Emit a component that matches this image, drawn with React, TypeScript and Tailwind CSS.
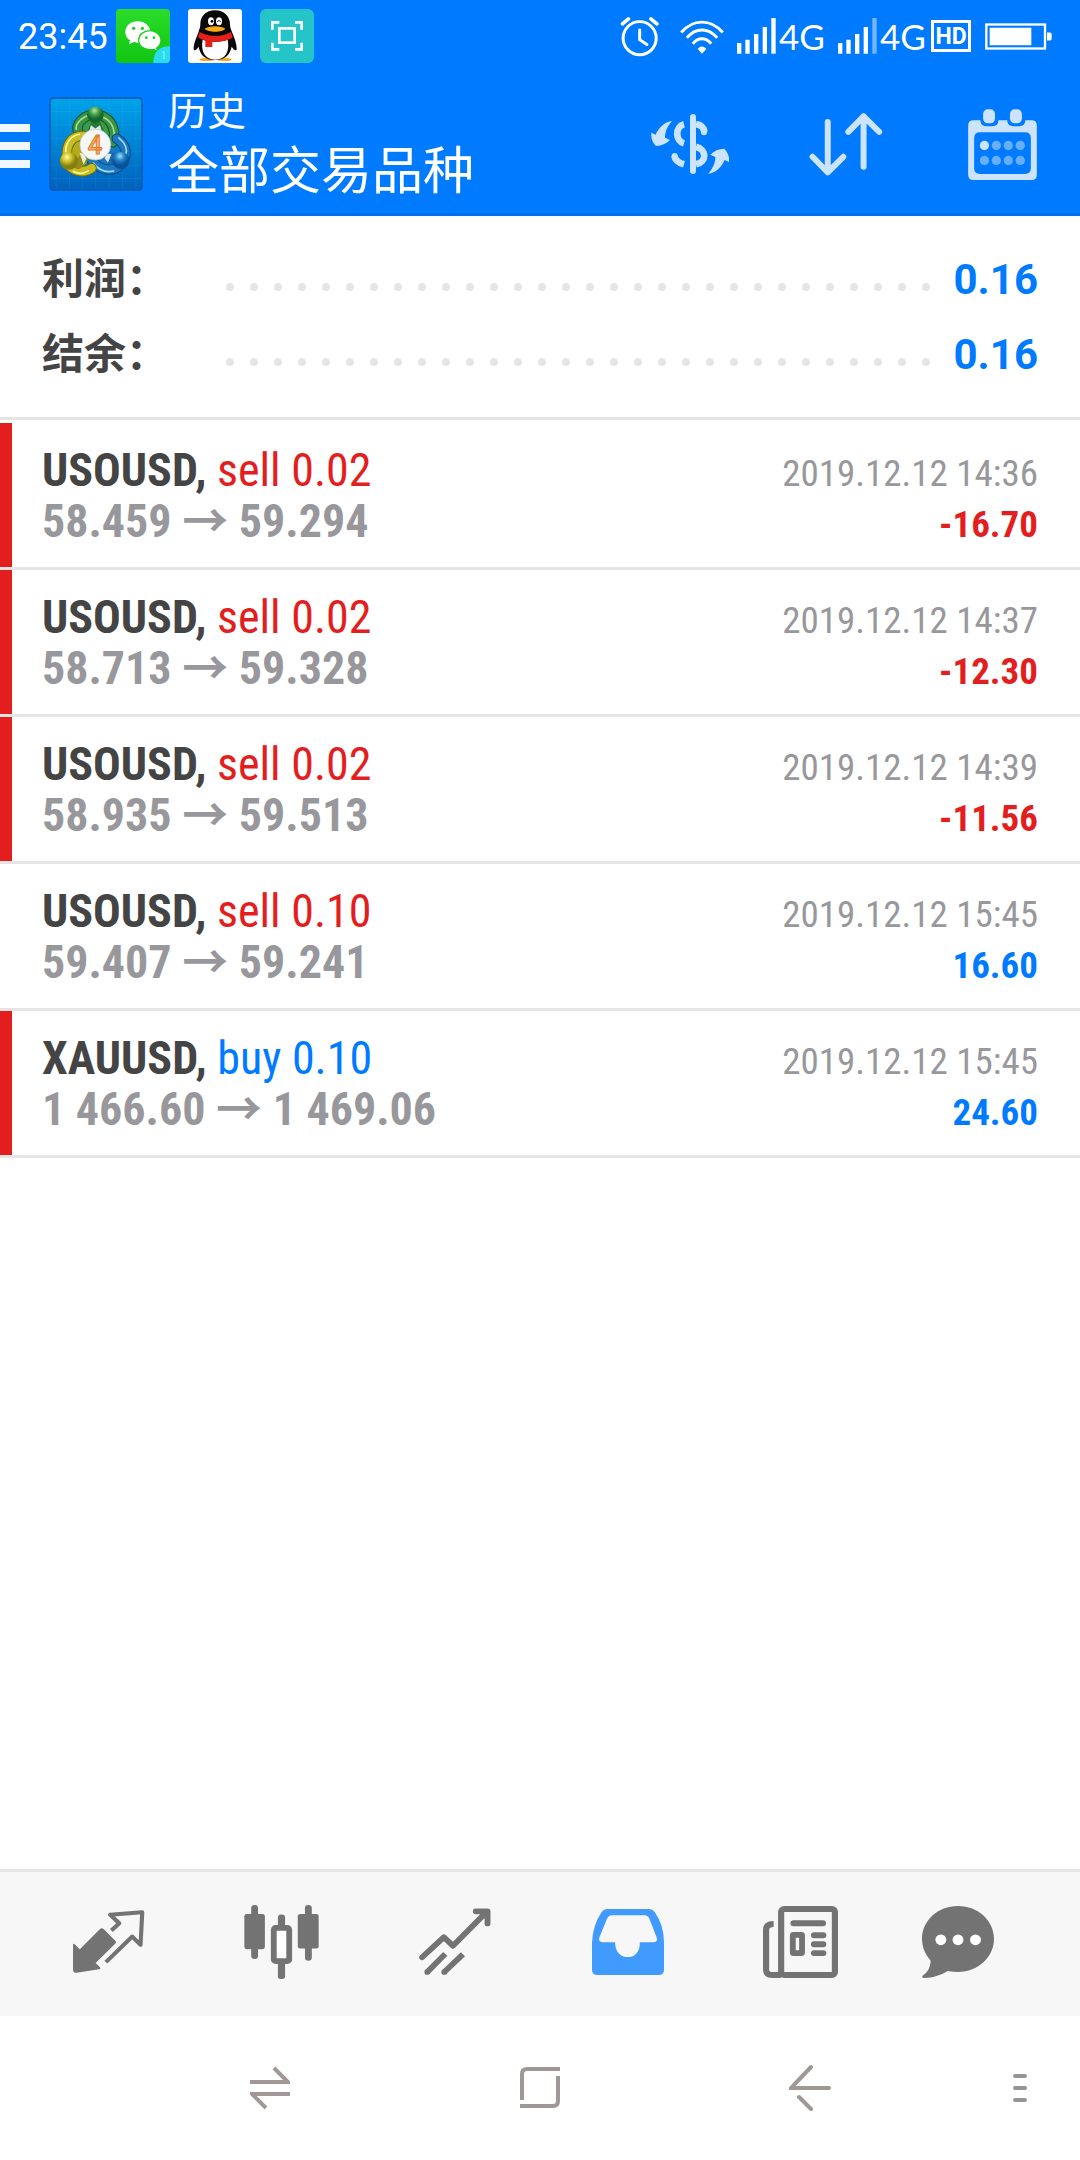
import type { ReactNode } from "react";

type Deal = {
  amount: string;
  close: string;
  flagged: boolean;
  open: string;
  side: "buy" | "sell";
  symbol: string;
  time: string;
  volume: string;
};

const DEALS: Deal[] = [
  { symbol: "USOUSD", side: "sell", volume: "0.02", open: "58.459", close: "59.294", time: "2019.12.12 14:36", amount: "-16.70", flagged: true },
  { symbol: "USOUSD", side: "sell", volume: "0.02", open: "58.713", close: "59.328", time: "2019.12.12 14:37", amount: "-12.30", flagged: true },
  { symbol: "USOUSD", side: "sell", volume: "0.02", open: "58.935", close: "59.513", time: "2019.12.12 14:39", amount: "-11.56", flagged: true },
  { symbol: "USOUSD", side: "sell", volume: "0.10", open: "59.407", close: "59.241", time: "2019.12.12 15:45", amount: "16.60", flagged: false },
  { symbol: "XAUUSD", side: "buy", volume: "0.10", open: "1 466.60", close: "1 469.06", time: "2019.12.12 15:45", amount: "24.60", flagged: true },
];

const SUMMARY = [
  { label: "利润：", value: "0.16" },
  { label: "结余：", value: "0.16" },
];

function WeChatIcon() {
  return (
    <svg viewBox="0 0 162 162" className="size-[54px]">
      <defs>
        <linearGradient id="wechat" x2="0" y2="1">
          <stop stopColor="#2bdc2b" />
          <stop offset="1" stopColor="#12c512" />
        </linearGradient>
        <clipPath id="wechat-clip">
          <rect width="162" height="162" rx="12" />
        </clipPath>
      </defs>
      <g clipPath="url(#wechat-clip)">
        <rect width="162" height="162" fill="url(#wechat)" />
        <path d="M65 37c-21 0-37 14-37 32 0 10 5 19 14 25l-3 12 14-7c5 2 9 2 14 2 20 0 36-14 36-32S86 37 65 37Z" fill="#fff" />
        <path d="M102 65c-19 0-34 12-34 29s15 28 34 28c4 0 8 0 11-1l12 7-3-11c8-5 13-13 13-23 0-17-15-29-33-29Z" fill="#fff" stroke="#1bd01b" strokeWidth="4" />
        <g fill="#1bd01b">
          <circle cx="53" cy="58" r="5" />
          <circle cx="79" cy="58" r="5" />
          <circle cx="91" cy="86" r="4" />
          <circle cx="114" cy="86" r="4" />
        </g>
        <path d="M112 162c0-32 16-50 50-50v50Z" fill="#29dcf0" />
        <path d="m139 130 5-3v24" fill="none" stroke="#9df4f8" strokeWidth="3" />
      </g>
    </svg>
  );
}

function QQIcon() {
  return (
    <svg viewBox="0 0 162 162" className="size-[54px]">
      <rect width="162" height="162" rx="9" fill="#fff" />
      <path d="M60 146c-16 0-26 3-26 6s8 4 24 4 24-2 26-6c3 4 10 6 25 6 14 0 21-1 21-4s-8-6-22-6Z" fill="#fba914" />
      <path d="M81 4c-27 0-44 18-44 42 0 8-2 13-4 18-2 13-17 35-16 58 3 6 10-2 15-9 4 25 20 40 49 40s45-15 50-40c5 7 11 15 15 9 1-23-12-45-16-58-2-5-4-10-4-18C126 22 108 4 81 4Z" fill="#080808" />
      <path d="M44 92c-7 35 8 60 38 60s44-25 37-60c-22 8-54 8-75 0Z" fill="#fff" />
      <path d="M35 69c29 16 66 16 94 0l5 17c-16 9-38 13-61 12v16H52V94c-9-2-16-5-22-9Z" fill="#e71f19" />
      <ellipse cx="69" cy="37" rx="9" ry="12" fill="#fff" />
      <ellipse cx="93" cy="37" rx="9" ry="12" fill="#fff" />
      <circle cx="72" cy="37" r="4" />
      <path d="M88 39c3-6 7-6 10 0" fill="none" stroke="#000" strokeWidth="3" />
      <path d="M50 59c10-10 52-10 62 0-9 12-52 12-62 0Z" fill="#fba914" />
    </svg>
  );
}

function ScanIcon() {
  return (
    <svg viewBox="0 0 162 162" className="size-[54px]">
      <rect width="162" height="162" rx="18" fill="#25c4c8" />
      <g fill="none" stroke="#fff" strokeWidth="8">
        <path d="M37 62V40h21M105 40h20v22M125 101v20h-20M58 121H37v-20" />
        <rect x="58" y="58" width="46" height="43" />
      </g>
    </svg>
  );
}

function AlarmIcon() {
  return (
    <svg viewBox="58 46 120 124" className="ml-auto h-[41px] w-10" fill="none" stroke="#fff" strokeLinecap="round">
      <circle cx="117" cy="113" r="50" strokeWidth="9" />
      <path d="M117 88v30l22 14" strokeWidth="9" />
      <path d="m65 70 18-15M151 55l18 15" strokeWidth="11" />
    </svg>
  );
}

function WifiIcon() {
  return (
    <svg viewBox="240 54 132 106" className="ml-5 h-[35px] w-11" fill="none" stroke="#fff" strokeWidth="9">
      <path d="M243 95c36-42 90-42 126 0M260 111c27-32 65-32 92 0M278 129c18-20 38-20 56 0" />
      <path d="m293 145c8-10 18-10 26 0l-13 14Z" fill="#fff" stroke="none" />
    </svg>
  );
}

function SignalIcon({ weak }: { weak: boolean }) {
  return (
    <svg viewBox="410 54 117 108" className="h-9 w-[39px]" fill="#fff">
      <path d="M410 129h13v32h-13ZM435 119h13v42h-13ZM461 102h13v59h-13ZM487 81h13v80h-13Z" />
      <path d="M513 54h13v107h-13Z" opacity={weak ? 0.45 : 1} />
    </svg>
  );
}

function BatteryIcon() {
  return (
    <svg viewBox="1155 68 201 80" className="ml-[14px] h-[27px] w-[67px]">
      <rect x="1159" y="72" width="176" height="72" fill="none" stroke="#fff" strokeWidth="7" />
      <path d="M1169 82h125v52h-125Z" fill="#fff" />
      <path d="M1341 96h9q5 0 5 5v14q0 5-5 5h-9Z" fill="#fff" />
    </svg>
  );
}

function AppLogo() {
  return (
    <svg viewBox="149 292 280 280" className="size-[94px]">
      <defs>
        <linearGradient id="tile" x2="0" y2="1">
          <stop stopColor="#00a3ea" />
          <stop offset="1" stopColor="#0062bd" />
        </linearGradient>
        <radialGradient id="green" cx=".45" cy=".25">
          <stop stopColor="#b8e3b0" />
          <stop offset=".5" stopColor="#46a24c" />
          <stop offset="1" stopColor="#14682a" />
        </radialGradient>
        <radialGradient id="yellow" cx=".4" cy=".3">
          <stop stopColor="#fdfbb0" />
          <stop offset=".5" stopColor="#cfc52a" />
          <stop offset="1" stopColor="#847f10" />
        </radialGradient>
        <radialGradient id="blue" cx=".45" cy=".25">
          <stop stopColor="#a5dcf7" />
          <stop offset=".5" stopColor="#2487cb" />
          <stop offset="1" stopColor="#07529a" />
        </radialGradient>
      </defs>
      <rect x="152" y="295" width="274" height="274" rx="10" fill="url(#tile)" stroke="#0757a8" strokeWidth="4" />
      <path d="M170 297v270M210 297v270M248 297v270M288 297v270M328 297v270M368 297v270M408 297v270M154 335h270M154 375h270M154 415h270M154 455h270M154 495h270M154 535h270" stroke="#5cc8ff" strokeOpacity=".16" strokeWidth="2" />
      <path d="M246 402l14-42h54l18 42Z" fill="#3f9a48" />
      <path d="M212 455l28-44 32 70-34 26Z" fill="#b5ac1c" />
      <path d="M290 478l46-44 34 40-20 40Z" fill="#1c78c0" />
      <g strokeLinecap="round" fill="none">
        <path d="M237 399c-12-28 14-52 50-56 38 4 66 36 52 84" stroke="#0f5423" strokeWidth="31" />
        <path d="M237 399c-12-28 14-52 50-56 38 4 66 36 52 84" stroke="#3a9442" strokeWidth="25" />
        <path d="M230 388c-2-22 24-40 44-42M301 349c28 8 44 30 42 62" stroke="#a5dc9c" strokeWidth="5" />
        <path d="M351 416c30 20 34 50 14 75-24 28-66 20-90-12" stroke="#064881" strokeWidth="31" />
        <path d="M351 416c30 20 34 50 14 75-24 28-66 20-90-12" stroke="#1c78c0" strokeWidth="25" />
        <path d="M357 414c22 18 26 36 20 52M341 513c-24 5-46-6-60-24" stroke="#9edbf8" strokeWidth="5" />
        <path d="M252 408c-34-2-52 22-50 62M212 500c24 18 46 16 64 4" stroke="#6f6b08" strokeWidth="31" />
        <path d="M252 408c-34-2-52 22-50 62M212 500c24 18 46 16 64 4" stroke="#c8bd22" strokeWidth="25" />
        <path d="M240 403c-28 4-42 28-41 53M222 514c14 8 28 8 44-2" stroke="#f7f49a" strokeWidth="5" />
        <path d="m263 461-28 32" stroke="#948d14" strokeWidth="28" />
      </g>
      <path d="m264 392 10-25h28l10 25Z" fill="#26793a" />
      <path d="m313 460 32-2-2 28-15 10Z" fill="#1668ae" />
      <circle cx="287" cy="345" r="25" fill="url(#green)" />
      <circle cx="208" cy="482" r="27" fill="url(#yellow)" />
      <circle cx="363" cy="481" r="26" fill="url(#blue)" />
      <path d="m274 376 13 10 14-10 5 17h-37ZM240 458l12 3 8 15-8 17ZM321 460l14 2-10 25-10-12Z" fill="#fff" opacity=".85" />
      <circle cx="287" cy="434" r="46" fill="#f5f6f8" stroke="#b8bfc8" strokeWidth="2" />
      <text x="286" y="461" textAnchor="middle" fontFamily="Roboto, sans-serif" fontSize="76" fontWeight="500" fill="#f9b56c" stroke="#e6782a" strokeWidth="3">
        4
      </text>
    </svg>
  );
}

function CurrencyIcon() {
  return (
    <svg viewBox="93 66 234 180" className="h-[60px] w-[78px]" fill="#cce4ff">
      <rect x="210" y="66" width="18" height="180" rx="9" />
      <g fill="none" stroke="#cce4ff" strokeWidth="20">
        <path d="M192 97c-27 7-27 49 0 57M228 96c17 3 24 12 25 24" />
        <path d="M228 164c33 9 33 46 0 53" />
        <path d="M192 217c-18-5-27-13-29-26" />
      </g>
      <circle cx="252" cy="121" r="9" />
      <circle cx="164" cy="192" r="9" />
      <path id="turn" d="M156 87c-22 2-40 20-49 41l-13-6c-2 16 4 30 14 40 17 0 31-7 42-18l-15-7c0-19 8-35 21-50Z" />
      <use href="#turn" transform="rotate(180 210.5 166)" />
    </svg>
  );
}

function SortIcon() {
  return (
    <svg viewBox="568 66 222 190" className="h-[63px] w-[74px]" fill="none" stroke="#cce4ff" strokeWidth="18" strokeLinecap="round" strokeLinejoin="round">
      <path d="M624 93v152M578 198l46 47 47-47M732 228V76M686 123l46-47 47 47" />
    </svg>
  );
}

function CalendarIcon() {
  return (
    <svg viewBox="1044 50 207 214" className="h-[71px] w-[69px]">
      <path fill="#cce4ff" fillRule="evenodd" d="M1060 84h21v4q3 14 17 14h20q14 0 17-14v-4h27v4q3 14 17 14h20q14 0 17-14v-4h19q16 0 16 16v148q0 16-16 16h-175q-16 0-16-16V100q0-16 16-16Zm20 36q-18 0-18 18v90q0 18 18 18h135q18 0 18-18v-90q0-18-18-18Z" />
      <rect x="1089" y="51" width="36" height="42" rx="14" fill="#cce4ff" />
      <rect x="1170" y="51" width="36" height="42" rx="14" fill="#cce4ff" />
      {[160, 205].map((cy) =>
        [1093, 1129, 1165, 1201].map((cx) => (
          <circle key={`${cx}-${cy}`} cx={cx} cy={cy} r="14" fill={cx === 1093 && cy === 160 ? "#cce4ff" : "#66afff"} />
        )),
      )}
    </svg>
  );
}

function QuotesIcon() {
  return (
    <svg viewBox="215 152 210 190" preserveAspectRatio="none" className="h-[63px] w-[72px]">
      <path fill="currentColor" d="M215 258q0-6 5-3l15 15 58-60q6-6 12 0l32 33q6 5 1 11l-57 58 12 12q5 6-2 7l-66 10q-10 1-10-9Z" />
      <path fill="none" stroke="currentColor" strokeWidth="12" strokeLinejoin="round" d="m327 214 23-22-27-26 94-7-5 98-24-25-77 77" />
    </svg>
  );
}

function ChartIcon() {
  return (
    <svg viewBox="708 134 219 223" preserveAspectRatio="none" className="h-[74px] w-[75px]">
      <g fill="currentColor">
        <rect x="709" y="161" width="60" height="106" rx="7" />
        <rect x="729" y="134" width="20" height="163" rx="10" />
        <rect x="865" y="161" width="61" height="104" rx="7" />
        <rect x="886" y="134" width="20" height="168" rx="10" />
        <rect x="807" y="163" width="21" height="50" rx="10" />
        <rect x="807" y="290" width="21" height="67" rx="8" />
      </g>
      <rect x="795" y="203" width="45" height="100" rx="5" fill="#fff" stroke="currentColor" strokeWidth="17" />
    </svg>
  );
}

function TradeIcon() {
  return (
    <svg viewBox="1213 143 208 200" preserveAspectRatio="none" className="h-[67px] w-[72px]" fill="none" stroke="currentColor" strokeWidth="17" strokeLinecap="round">
      <path strokeLinejoin="round" d="m1222 290 63-60 26 26 94-98M1377 153h34v36" />
      <path d="m1237 334 52-54M1286 334l54-53" strokeLinecap="butt" />
      <path d="M1237 334h0M1286 334h0" />
      <path d="M1396 152h16v16Z" strokeWidth="8" fill="currentColor" />
    </svg>
  );
}

function HistoryIcon() {
  return (
    <svg viewBox="148 143 209 199" preserveAspectRatio="none" className="h-[66px] w-[72px]">
      <path fill="#419bff" fillRule="evenodd" d="M192 143h122q10 0 16 9 27 40 27 92v82q0 16-16 16H164q-16 0-16-16v-82q2-52 28-92 6-9 16-9Zm14 19q-10 0-15 12l-22 56q-2 13 9 13h37c0 29 16 45 37 45s35-16 35-45h40q13 0 9-13l-20-54q-4-14-16-14Z" />
    </svg>
  );
}

function NewsIcon() {
  return (
    <svg viewBox="647 134 219 217" preserveAspectRatio="none" className="h-[72px] w-[75px]" fill="none" stroke="currentColor" strokeWidth="18">
      <rect x="700" y="143" width="157" height="199" rx="9" />
      <path d="M678 188q-22 0-22 17v121q0 16 18 16h26" />
      <g strokeLinecap="round">
        <path d="M736 186h86M796 222h27M796 249h27M796 276h27" />
      </g>
      <rect x="734" y="221" width="27" height="55" rx="2" strokeWidth="17" />
    </svg>
  );
}

function ChatIcon() {
  return (
    <svg viewBox="1108 134 210 217" preserveAspectRatio="none" className="h-[72px] w-[72px]">
      <path fill="currentColor" d="M1213 134c59 0 105 44 105 99s-46 100-105 100c-10 0-20-1-30-3-21 13-44 21-67 21q-12 0-5-8c15-11 22-26 22-45-16-18-25-40-25-65 0-55 46-99 105-99Z" />
      <g fill="#fff">
        <circle cx="1163" cy="236" r="16" />
        <circle cx="1213" cy="236" r="16" />
        <circle cx="1264" cy="236" r="16" />
      </g>
    </svg>
  );
}

function SummaryRow({ label, value }: { label: string; value: string }) {
  return (
    <div className="flex h-[75px] items-center">
      <dt className="w-[176px] text-[42px] font-bold text-[#444]">{label}</dt>
      <span className="mt-[14px] h-2 flex-1 bg-[radial-gradient(circle,#e5e5e5_3.5px,transparent_4.5px)] bg-[length:24px_8px] bg-repeat-x" />
      <dd className="pl-[15px] text-[42px] font-bold text-[#007bff]">{value}</dd>
    </div>
  );
}

function DealRow({ deal }: { deal: Deal }) {
  return (
    <li className="border-b-[3px] border-[#e5e5e5] font-['Roboto_Condensed','Liberation_Sans_Narrow','Noto_Sans_CJK_SC',sans-serif]">
      <div className={`border-l-[12px] pt-[22px] pr-[42px] pb-5 pl-[30px] ${deal.flagged ? "border-[#e31e1e]" : "border-transparent"}`}>
        <div className="flex h-[51px] items-baseline justify-between">
          <p className="text-[46px] leading-[51px] text-[#444]">
            <b>{deal.symbol},</b>{" "}
            <span className={deal.side === "sell" ? "text-[#e31e1e]" : "text-[#007bff]"}>
              {deal.side} {deal.volume}
            </span>
          </p>
          <time className="text-[37px] leading-none text-[#98989c]">{deal.time}</time>
        </div>
        <div className="flex h-[51px] items-baseline justify-between font-bold">
          <p className="text-[46px] leading-[51px] text-[#98989c]">
            {deal.open} → {deal.close}
          </p>
          <p className={`text-[37px] leading-none ${deal.amount.startsWith("-") ? "text-[#e31e1e]" : "text-[#007bff]"}`}>
            {deal.amount}
          </p>
        </div>
      </div>
    </li>
  );
}

function TabButton({ label, active, last, children }: { label: string; active?: boolean; last?: boolean; children: ReactNode }) {
  return (
    <button
      type="button"
      aria-label={label}
      aria-current={active ? "page" : undefined}
      className={`flex items-center justify-center text-[#737373] ${last ? "flex-[142]" : "flex-[173]"}`}
    >
      {children}
    </button>
  );
}

export default function App() {
  return (
    <div className="flex min-h-screen w-full flex-col bg-white font-[Roboto,'Noto_Sans_CJK_SC',sans-serif]">
      <header className="border-b-[3px] border-[#0071eb] bg-[#007bff] text-white">
        <div className="flex h-[72px] items-center pr-7 pl-[18px]">
          <span className="pt-[2px] text-[36px] leading-none">23:45</span>
          <div className="ml-2 flex gap-[18px]">
            <WeChatIcon />
            <QQIcon />
            <ScanIcon />
          </div>
          <AlarmIcon />
          <WifiIcon />
          <div className="ml-[13px] flex items-center">
            <SignalIcon weak={false} />
            <span className="w-[62px] pl-[3px] font-[Lato,sans-serif] text-[35px] leading-none">4G</span>
            <SignalIcon weak />
            <span className="w-[54px] pl-[3px] font-[Lato,sans-serif] text-[35px] leading-none">4G</span>
          </div>
          <span className="flex h-8 w-10 items-center justify-center border-[3px] border-white text-[23px] leading-none font-bold">HD</span>
          <BatteryIcon />
        </div>
        <div className="flex h-[141px] items-center pt-[3px] pr-[43px]">
          <button type="button" aria-label="菜单" className="flex w-[30px] flex-col gap-[10px] pt-1">
            <span className="h-2 bg-[#f0f7ff]" />
            <span className="h-2 bg-[#f0f7ff]" />
            <span className="h-2 bg-[#f0f7ff]" />
          </button>
          <div className="ml-[19px]">
            <AppLogo />
          </div>
          <h1 className="ml-[25px] flex-1 pt-[2px] font-normal">
            <span className="block text-[39px] leading-[54px]">历史</span>
            <span className="block text-[51px] leading-[66px]">全部交易品种</span>
          </h1>
          <button type="button" aria-label="货币">
            <CurrencyIcon />
          </button>
          <button type="button" aria-label="排序" className="ml-[80px]">
            <SortIcon />
          </button>
          <button type="button" aria-label="日期" className="ml-[85px]">
            <CalendarIcon />
          </button>
        </div>
      </header>

      <main className="flex-1">
        <dl className="mb-[3px] border-b-[3px] border-[#e5e5e5] px-[42px] pt-[26px] pb-[25px]">
          {SUMMARY.map((row) => (
            <SummaryRow key={row.label} label={row.label} value={row.value} />
          ))}
        </dl>
        <ul>
          {DEALS.map((deal) => (
            <DealRow key={deal.time + deal.symbol} deal={deal} />
          ))}
        </ul>
      </main>

      <nav className="flex h-[147px] border-t-[3px] border-[#e5e5e5] bg-[#f7f7f7] pr-[51px] pb-[5px] pl-[22px]">
        <TabButton label="行情">
          <QuotesIcon />
        </TabButton>
        <TabButton label="图表">
          <ChartIcon />
        </TabButton>
        <TabButton label="交易">
          <TradeIcon />
        </TabButton>
        <TabButton label="历史" active>
          <HistoryIcon />
        </TabButton>
        <TabButton label="新闻">
          <NewsIcon />
        </TabButton>
        <TabButton label="消息" last>
          <ChatIcon />
        </TabButton>
      </nav>

      <div className="flex h-36 pl-[12.5%] text-[#9f9896]">
        <button type="button" aria-label="切换" className="flex w-2/7 items-center justify-center">
          <svg viewBox="0 0 40 44" className="h-11 w-10" fill="none" stroke="currentColor" strokeWidth="4">
            <path d="M0 16h38L24 2M40 28H2l14 14" />
          </svg>
        </button>
        <button type="button" aria-label="主页" className="flex w-2/7 items-center justify-center">
          <svg viewBox="0 0 40 42" className="h-[42px] w-10" fill="none" stroke="currentColor" strokeWidth="4">
            <path d="M40 2H7Q2 2 2 7v26M38 9v25q0 5-5 5H0" />
          </svg>
        </button>
        <button type="button" aria-label="返回" className="flex w-2/7 items-center justify-center">
          <svg viewBox="0 0 42 48" className="h-12 w-[42px]" fill="none" stroke="currentColor" strokeWidth="4" strokeLinecap="round">
            <path d="M22 3 2 24h38M10 33l12 12" />
          </svg>
        </button>
        <button type="button" aria-label="更多" className="flex flex-1 items-center justify-center pl-[14px]">
          <svg viewBox="0 0 14 28" className="h-7 w-[14px]" fill="none" stroke="#949494" strokeWidth="4" strokeLinecap="round">
            <path d="M2 2h10M2 14h10M2 26h10" />
          </svg>
        </button>
      </div>
    </div>
  );
}
